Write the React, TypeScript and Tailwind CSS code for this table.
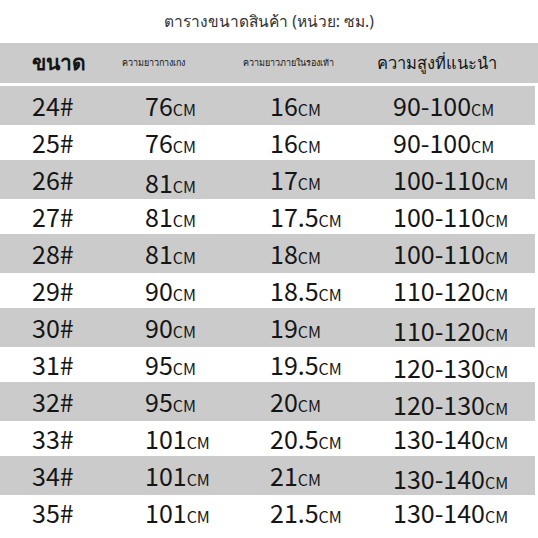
const rows = [
  ["24#", "76", "16", "90-100"],
  ["25#", "76", "16", "90-100"],
  ["26#", "81", "17", "100-110"],
  ["27#", "81", "17.5", "100-110"],
  ["28#", "81", "18", "100-110"],
  ["29#", "90", "18.5", "110-120"],
  ["30#", "90", "19", "110-120"],
  ["31#", "95", "19.5", "120-130"],
  ["32#", "95", "20", "120-130"],
  ["33#", "101", "20.5", "130-140"],
  ["34#", "101", "21", "130-140"],
  ["35#", "101", "21.5", "130-140"],
];

// cells that sit a little lower in the original picture
const lowered = ["26#-1", "30#-3", "31#-3", "32#-3", "34#-3"];

function Cm({ value, low }: { value: string; low?: boolean }) {
  return (
    <span className={low ? "translate-y-[3px]" : ""}>
      {value}
      <span className="text-[16px]">CM</span>
    </span>
  );
}

export default function App() {
  return (
    <div
      className="w-[538px] h-[538px] bg-white text-[#151515] overflow-hidden"
      style={{ fontFamily: '"Noto Sans", "Noto Sans CJK SC", sans-serif' }}
    >
      <div className="h-[43px] flex items-center justify-center text-[15.5px] text-[#333]">
        ตารางขนาดสินค้า (หน่วย: ซม.)
      </div>

      <div className="h-[40px] bg-[#cbcbcb] flex items-center">
        <div className="w-[122px] pl-[32px] text-[21px] font-bold">ขนาด</div>
        <div className="w-[121px] text-[9px]">ความยาวกางเกง</div>
        <div className="w-[134px] text-[9px]">ความยาวภายในรองเท้า</div>
        <div className="text-[16.5px]">ความสูงที่แนะนำ</div>
      </div>

      <div className="mt-[3px] w-[535px]" style={{ fontFamily: '"Noto Sans CJK SC", "Noto Sans", sans-serif' }}>
        {rows.map((r, i) => (
          <div
            key={r[0]}
            className={
              i % 2 === 0
                ? "h-[39px] bg-[#cbcbcb] grid grid-cols-[113px_125px_123px_1fr] items-center pl-[32px] text-[25px] leading-none"
                : "h-[35px] bg-white grid grid-cols-[113px_125px_123px_1fr] items-center pl-[32px] text-[25px] leading-none"
            }
          >
            <span>{r[0]}</span>
            <Cm value={r[1]} low={lowered.includes(r[0] + "-1")} />
            <Cm value={r[2]} low={lowered.includes(r[0] + "-2")} />
            <Cm value={r[3]} low={lowered.includes(r[0] + "-3")} />
          </div>
        ))}
      </div>
    </div>
  );
}
